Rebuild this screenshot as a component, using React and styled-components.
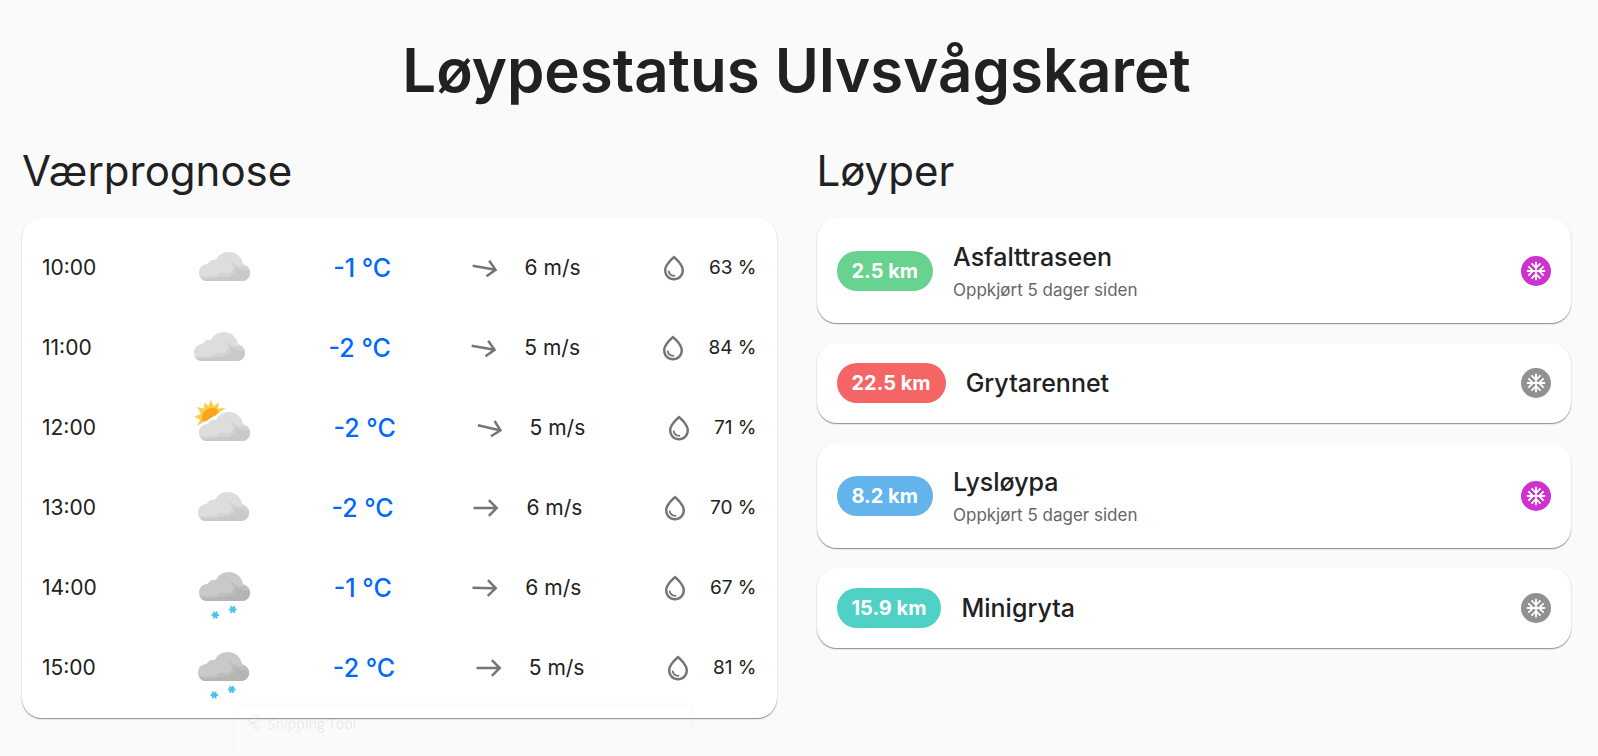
import styled, { createGlobalStyle } from 'styled-components'

const forecast = [
  { time: '10:00', symbol: 'cloudy', temp: -1, wind: 6, direction: 10, humidity: 63 },
  { time: '11:00', symbol: 'cloudy', temp: -2, wind: 5, direction: 10, humidity: 84 },
  { time: '12:00', symbol: 'partly', temp: -2, wind: 5, direction: 13, humidity: 71 },
  { time: '13:00', symbol: 'cloudy', temp: -2, wind: 6, direction: 0, humidity: 70 },
  { time: '14:00', symbol: 'snow', temp: -1, wind: 6, direction: 1, humidity: 67 },
  { time: '15:00', symbol: 'snow', temp: -2, wind: 5, direction: 0, humidity: 81 },
]

const tracks = [
  { name: 'Asfalttraseen', km: '2.5', color: '#68d391', groomed: 'Oppkjørt 5 dager siden' },
  { name: 'Grytarennet', km: '22.5', color: '#f56565' },
  { name: 'Lysløypa', km: '8.2', color: '#63b3ed', groomed: 'Oppkjørt 5 dager siden' },
  { name: 'Minigryta', km: '15.9', color: '#4fd1c5' },
]

function App() {
  return (
    <Page>
      <GlobalStyle />
      <Title>Løypestatus Ulvsvågskaret</Title>
      <Columns>
        <section>
          <Heading>Værprognose</Heading>
          <ForecastCard>
            {forecast.map((hour) => (
              <Hour key={hour.time} {...hour} />
            ))}
          </ForecastCard>
        </section>
        <section>
          <Heading>Løyper</Heading>
          <TrackList>
            {tracks.map((track) => (
              <Track key={track.name} {...track} />
            ))}
          </TrackList>
        </section>
      </Columns>
      <Ghost>
        <SnipIcon />
        Snipping Tool
      </Ghost>
    </Page>
  )
}

export default App

function Hour({ time, symbol, temp, wind, direction, humidity }) {
  return (
    <HourRow>
      <time>{time}</time>
      <WeatherSymbol symbol={symbol} />
      <Temperature>{temp} °C</Temperature>
      <Wind>
        <Icon viewBox="0 0 24 24" $turn={direction}>
          <path d="m15 5-1.41 1.41L18.17 11H2v2h16.17l-4.59 4.59L15 19l7-7z" />
        </Icon>
        {wind} m/s
      </Wind>
      <Humidity>
        <Icon viewBox="0 0 24 24">
          <path d="M12 2c-5.33 4.55-8 8.48-8 11.8 0 4.98 3.8 8.2 8 8.2s8-3.22 8-8.2c0-3.32-2.67-7.25-8-11.8m0 18c-3.35 0-6-2.57-6-6.2 0-2.34 1.95-5.44 6-9.14 4.05 3.7 6 6.79 6 9.14 0 3.63-2.65 6.2-6 6.2m-4.17-6c.37 0 .67.26.74.62.41 2.22 2.28 2.98 3.64 2.87.43-.02.79.32.79.75 0 .4-.32.73-.72.75-2.13.13-4.62-1.09-5.19-4.12-.08-.45.28-.87.74-.87" />
        </Icon>
        {humidity} %
      </Humidity>
    </HourRow>
  )
}

function Track({ name, km, color, groomed }) {
  return (
    <TrackCard>
      <Distance $color={color}>{km} km</Distance>
      <TrackText>
        <TrackName>{name}</TrackName>
        {groomed && <Groomed>{groomed}</Groomed>}
      </TrackText>
      <Snow $fresh={Boolean(groomed)}>
        <svg viewBox="0 0 24 24">
          <path d="M22 11h-4.17l3.24-3.24-1.41-1.42L15 11h-2V9l4.66-4.66-1.42-1.41L13 6.17V2h-2v4.17L7.76 2.93 6.34 4.34 11 9v2H9L4.34 6.34 2.93 7.76 6.17 11H2v2h4.17l-3.24 3.24 1.41 1.42L9 13h2v2l-4.66 4.66 1.42 1.41L11 17.83V22h2v-4.17l3.24 3.24 1.42-1.41L13 15v-2h2l4.66 4.66 1.41-1.42L17.83 13H22z" />
        </svg>
      </Snow>
    </TrackCard>
  )
}

const cloudPath =
  'M32 53 C27 53 24 49 24 44.500 C24 40 27.500 36 32.500 36 C34.500 32.500 38 31 41 32 C43 27 48 24 54 24 C61 24 67 29 68 36 C72 37 75 40.500 75 44.500 C75 49.500 71 53 67 53 Z'

function WeatherSymbol({ symbol }) {
  const dark = symbol === 'snow'
  return (
    <Symbol viewBox="0 0 80 80">
      {symbol === 'partly' && (
        <>
          <path
            fill="#ffcb4d"
            d="M19.500 28.500 L26 26 L22 19 L29 20.500 L29.500 14.500 L33.500 18 L36 12 L38.500 18 L44 14.500 L43 20.500 L51 20 L45 24 L30 33 L22 38 L25 32 Z"
          />
          <path fill="#faa61a" d="M27 33 C26 25 31 20.500 37 20 C41 20 43 22 43.500 24.500 L40 28 C36 29 34 31 32 33 Z" />
        </>
      )}
      <path fill={dark ? '#c9c9c9' : '#dddddd'} d={cloudPath} />
      <path
        fill={dark ? '#bdbdbd' : '#d2d2d2'}
        d="M25 48 C31 49 37 49 42 48 C46 43 50 46 55 45 C57 44 57 42 58 41 C60 38 56 35 53 33 C58 34 61 38 64 38 C67 39 68 37 71 38 C74 40 75 42 75 44.500 C75 49.500 71 53 67 53 H33 C29 53 26 51 25 48 Z"
      />
      <path
        fill={dark ? '#b5b5b5' : '#c9c9c9'}
        d="M26 50 C33 51 41 51 46 49 C51 49 55 49 59 46 C62 44 61 41 60 39 C64 42 70 42 75 43 C76 49 71 53 67 53 H33 C29 53 27 52 26 50 Z"
      />
      {dark && (
        <g stroke="#47c1ed" strokeWidth="2">
          <path d="M36.500 67h7.500M38.300 63.700l3.800 6.600M42.100 63.700l-3.800 6.600" />
          <path d="M54 61.500h7.500M55.800 58.200l3.800 6.600M59.600 58.200l-3.800 6.600" />
        </g>
      )}
    </Symbol>
  )
}

function SnipIcon() {
  return (
    <svg width="18" height="18" viewBox="0 0 18 18" fill="none" stroke="#999">
      <ellipse cx="10" cy="5" rx="6" ry="4" />
      <path d="M1 4l10 9M12 6l-9 5" />
      <circle cx="12" cy="14" r="2" />
    </svg>
  )
}

const GlobalStyle = createGlobalStyle`
body {
  margin: 0;
  background-color: #fafafa;
  color: #212121;
  font-family: Inter, sans-serif;
}
`

const Page = styled.main`
padding: 40px 27px 38px 22px;
`

const Title = styled.h1`
margin: 0;
font-size: 60px;
line-height: 60px;
font-weight: 600;
text-align: center;
`

const Columns = styled.div`
display: grid;
grid-template-columns: 1fr 1fr;
gap: 40px;
margin-top: 40px;
`

const Heading = styled.h2`
margin: 0 0 16px;
font-size: 42px;
line-height: 62px;
font-weight: 400;
`

const Card = styled.div`
background-color: #fff;
border-radius: 20px;
box-shadow: 0 1px 2px rgba(0, 0, 0, .12), 0 1px 1px rgba(0, 0, 0, .36);
`

const ForecastCard = styled(Card)`
padding: 10px 20px;
`

const HourRow = styled.div`
display: flex;
justify-content: space-between;
align-items: center;
height: 80px;
font-size: 21px;
line-height: 30px;
`

const Symbol = styled.svg`
width: 80px;
height: 80px;
`

const Temperature = styled.span`
color: #0068ff;
font-size: 25px;
font-weight: 500;
`

const Wind = styled.span`
display: flex;
align-items: center;
gap: 25px;
`

const Humidity = styled.span`
display: flex;
align-items: center;
gap: 20px;
font-size: 19px;
`

const Icon = styled.svg`
width: 30px;
height: 30px;
fill: #757575;
transform: rotate(${({ $turn = 0 }) => $turn}deg);
`

const TrackList = styled.div`
display: grid;
gap: 20px;
`

const TrackCard = styled(Card)`
display: flex;
align-items: center;
gap: 20px;
padding: 20px;
`

const Distance = styled.span`
padding: 0 15px;
border-radius: 20px;
background-color: ${({ $color }) => $color};
color: #fff;
font-size: 20px;
line-height: 40px;
font-weight: 700;
`

const TrackText = styled.div`
flex: 1;
`

const TrackName = styled.div`
font-size: 25px;
line-height: 39px;
font-weight: 500;
`

const Groomed = styled.div`
color: #666;
font-size: 17px;
line-height: 26px;
`

const Snow = styled.span`
display: grid;
place-items: center;
width: 30px;
height: 30px;
border-radius: 50%;
background-color: ${({ $fresh }) => ($fresh ? '#cc33cc' : '#919191')};
svg {
  width: 22px;
  height: 22px;
  fill: #fff;
}
`

/* faded window left behind at the bottom of the screen */
const Ghost = styled.div`
position: fixed;
left: 234px;
bottom: 0;
display: flex;
gap: 5px;
box-sizing: border-box;
width: 459px;
height: 52px;
padding: 9px 10px;
border: 1px solid #ddd;
border-bottom: 0;
box-shadow: 0 0 12px rgba(0, 0, 0, .1);
color: #999;
font-family: "Open Sans", sans-serif;
font-size: 14px;
line-height: 20px;
opacity: .16;
`
